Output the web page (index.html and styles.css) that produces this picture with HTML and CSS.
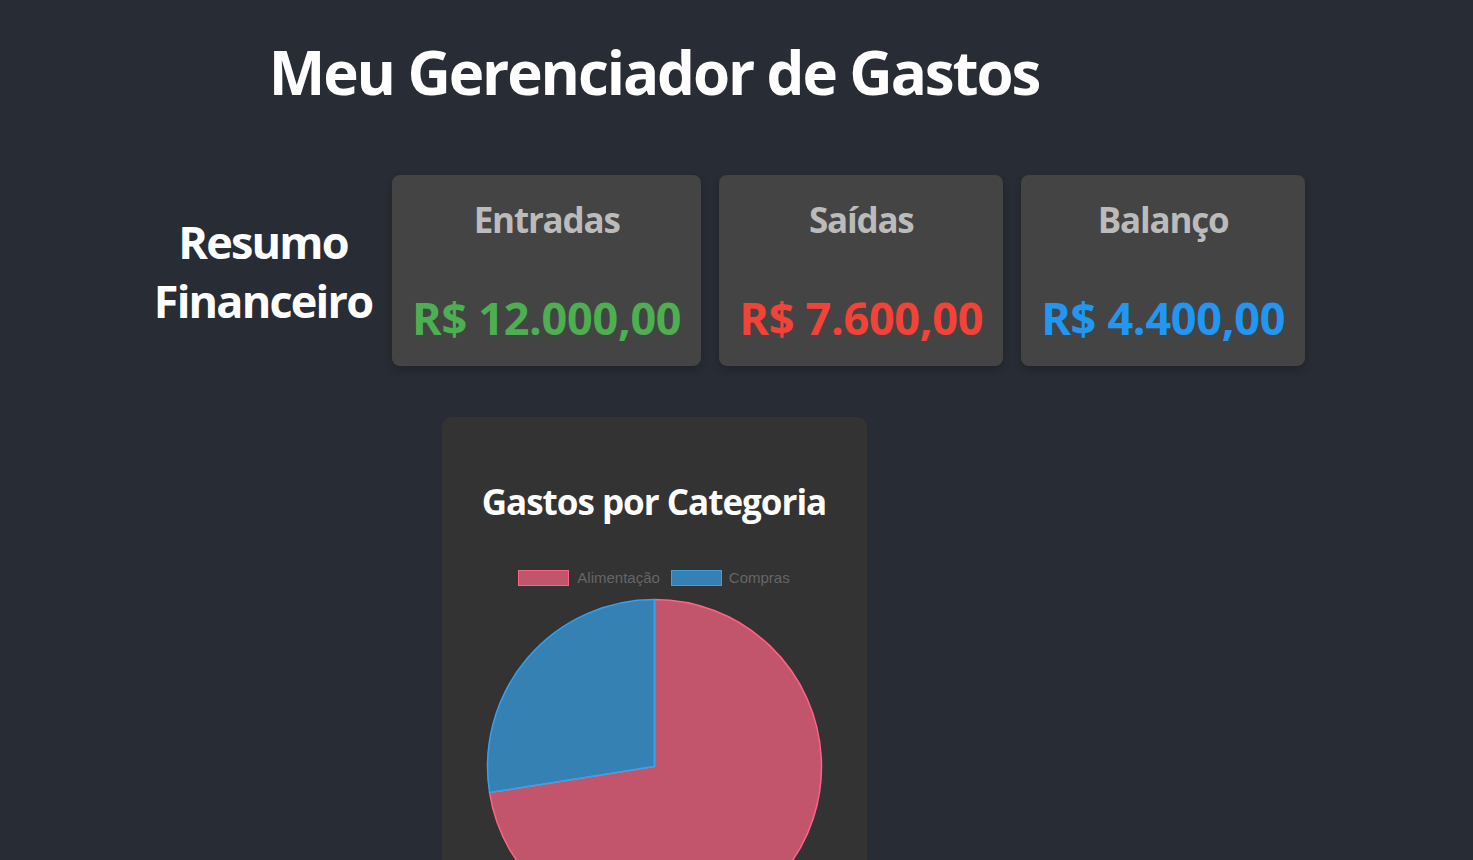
FILE: index.html
```html
<!DOCTYPE html>
<html lang="pt-BR">
<head>
<meta charset="utf-8">
<title>Meu Gerenciador de Gastos</title>
<link rel="stylesheet" href="styles.css">
</head>
<body>
<div class="app">
  <h1 class="title">Meu Gerenciador de Gastos</h1>

  <section class="summary">
    <h2 class="summary-title">Resumo Financeiro</h2>
    <div class="card">
      <h3 class="card-label">Entradas</h3>
      <p class="card-value income">R$ 12.000,00</p>
    </div>
    <div class="card">
      <h3 class="card-label">Saídas</h3>
      <p class="card-value expense">R$ 7.600,00</p>
    </div>
    <div class="card">
      <h3 class="card-label">Balanço</h3>
      <p class="card-value balance">R$ 4.400,00</p>
    </div>
  </section>

  <section class="chart-card">
    <h3 class="chart-title">Gastos por Categoria</h3>
    <div class="legend">
      <span class="legend-box food"></span>
      <span class="legend-text">Alimentação</span>
      <span class="legend-box shop"></span>
      <span class="legend-text second">Compras</span>
    </div>
    <svg class="pie" width="345" height="345" viewBox="0 0 345 345">
      <path d="M172.5 172.5 L172.5 5.5 A167 167 0 1 1 7.56 198.62 Z" fill="rgba(255,99,132,0.7)" stroke="#ff6384" stroke-width="1.5" stroke-linejoin="round"/>
      <path d="M172.5 172.5 L7.56 198.62 A167 167 0 0 1 172.5 5.5 Z" fill="rgba(54,162,235,0.7)" stroke="#36a2eb" stroke-width="1.5" stroke-linejoin="round"/>
    </svg>
  </section>
</div>
</body>
</html>
```
FILE: styles.css
```css
html, body {
  margin: 0;
  padding: 0;
}

body {
  background: #282c34;
  color: #fff;
  font-family: "Open Sans", "Noto Sans", sans-serif;
}

.app {
  width: 996px;
  padding-left: 156px;
}

.title {
  margin: 36px 0 0;
  font-size: 60px;
  line-height: 72px;
  font-weight: 700;
  letter-spacing: -2.1px;
  text-align: center;
}

.summary {
  display: flex;
  align-items: center;
  gap: 18px;
  width: max-content;
  margin-top: 67px;
}

.summary-title {
  width: 222px;
  margin: 0 0 0 -4px;
  font-size: 45px;
  line-height: 59px;
  font-weight: 700;
  letter-spacing: -1.8px;
  text-align: center;
}

.card {
  flex-shrink: 0;
  background: #444;
  border-radius: 8px;
  padding: 20px;
  box-shadow: 0 4px 8px rgba(0, 0, 0, 0.2);
  text-align: center;
}

.card-label {
  margin: 0;
  font-size: 35px;
  line-height: 49px;
  font-weight: 700;
  letter-spacing: -1.2px;
  color: #bbb;
}

.card-value {
  margin: 45px 0 0;
  font-size: 45px;
  line-height: 57px;
  font-weight: 700;
  letter-spacing: -0.3px;
  white-space: nowrap;
}

.income { color: #4caf50; }
.expense { color: #f44336; }
.balance { color: #2196f3; }

.chart-card {
  box-sizing: border-box;
  width: 425px;
  margin: 51px auto 0;
  padding: 20px 20px 30px;
  background: #333;
  border-radius: 10px;
  display: flex;
  flex-direction: column;
  align-items: center;
}

.chart-title {
  margin: 40px 0 0;
  font-size: 35px;
  line-height: 49px;
  font-weight: 700;
  letter-spacing: -1px;
  color: #fff;
}

.legend {
  display: flex;
  align-items: center;
  height: 16px;
  margin-top: 44px;
  font-family: "Liberation Sans", Arial, sans-serif;
  font-size: 15px;
  color: #666;
}

.legend-box {
  box-sizing: border-box;
  width: 51px;
  height: 16px;
  border: 1.5px solid;
}

.legend-box.food {
  background: rgba(255, 99, 132, 0.7);
  border-color: #ff6384;
}

.legend-box.shop {
  background: rgba(54, 162, 235, 0.7);
  border-color: #36a2eb;
  margin-left: 11px;
}

.legend-text {
  margin-left: 8px;
  line-height: 16px;
}

.legend-text.second {
  margin-left: 7px;
}

.pie {
  display: block;
  margin-top: 8px;
}
```
